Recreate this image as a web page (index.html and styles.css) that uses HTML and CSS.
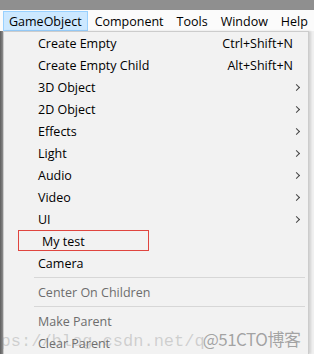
FILE: index.html
```html
<!DOCTYPE html>
<html lang="en">
<head>
    <meta charset="UTF-8">
    <meta name="viewport" content="width=device-width, initial-scale=1.0">
    <title>GameObject menu</title>
    <link rel="stylesheet" href="styles.css">
</head>
<body>

    <div class="title-strip"></div>

    <div class="menubar">
        <span class="menubar-item active">GameObject</span>
        <span class="menubar-item">Component</span>
        <span class="menubar-item">Tools</span>
        <span class="menubar-item">Window</span>
        <span class="menubar-item">Help</span>
    </div>

    <div class="workspace">
        <div class="editor-edge"></div>

        <ul class="dropdown">
            <li class="item"><span class="label">Create Empty</span><span class="shortcut">Ctrl+Shift+N</span></li>
            <li class="item"><span class="label">Create Empty Child</span><span class="shortcut">Alt+Shift+N</span></li>
            <li class="item sub"><span class="label">3D Object</span></li>
            <li class="item sub"><span class="label">2D Object</span></li>
            <li class="item sub"><span class="label">Effects</span></li>
            <li class="item sub"><span class="label">Light</span></li>
            <li class="item sub"><span class="label">Audio</span></li>
            <li class="item sub"><span class="label">Video</span></li>
            <li class="item sub"><span class="label">UI</span></li>
            <li class="item marked"><span class="label">My test</span></li>
            <li class="item"><span class="label">Camera</span></li>
            <li class="separator"></li>
            <li class="item disabled"><span class="label">Center On Children</span></li>
            <li class="separator"></li>
            <li class="item disabled"><span class="label">Make Parent</span></li>
            <li class="item disabled"><span class="label">Clear Parent</span></li>
        </ul>
    </div>

    <!-- watermark stamped over the screenshot -->
    <div class="watermark">
        <span class="wm-url">https://blog.csdn.net/q</span>
        <span class="wm-site">@51CTO博客</span>
    </div>

</body>
</html>
```

FILE: styles.css
```css
html, body {
    margin: 0;
    padding: 0;
}

body {
    width: 314px;
    height: 354px;
    overflow: hidden;
    position: relative;
    background-color: #f0f0f0;
    font-family: "Open Sans", "Noto Sans", sans-serif;
    font-size: 12.5px;
    color: #000;
}

.title-strip {
    height: 10px;
    background-color: #8f8f8f;
}

/* 顶部菜单栏 */
.menubar {
    height: 21px;
    display: flex;
    align-items: stretch;
    background-color: #fbfbfb;
    padding-left: 3px;
}

.menubar-item {
    display: flex;
    align-items: center;
    padding: 0 5px;
    margin-right: 1px;
    border: 1px solid transparent;
    margin-top: 1px;
}

.menubar-item.active {
    background-color: #cce8ff;
    border-color: #99d1ff;
}

.workspace {
    display: flex;
    height: 323px;
}

.editor-edge {
    width: 3px;
    flex: none;
    background: linear-gradient(to right, #5e5e5e, #8d8d8d);
}

/* 下拉菜单 */
.dropdown {
    list-style: none;
    margin: 0;
    padding: 0;
    width: 306px;
    flex: none;
    background-color: #f2f2f2;
    border: 1px solid #cccccc;
    border-bottom: none;
    box-sizing: border-box;
    box-shadow: 2px 0 2px rgba(0, 0, 0, 0.12);
}

.item {
    position: relative;
    height: 22px;
    display: flex;
    align-items: center;
    padding-left: 34px;
    padding-right: 15px;
}

.label {
    flex: 1;
}

.shortcut {
    text-align: right;
}

.item.sub::after {
    content: "";
    width: 4px;
    height: 4px;
    border-top: 1.3px solid #444;
    border-right: 1.3px solid #444;
    transform: rotate(45deg);
    margin-right: -6px;
}

.item.disabled {
    color: #6d6d6d;
}

.item.marked .label {
    padding-left: 4px;
}

/* 标注框, 盖在菜单项上 */
.item.marked::before {
    content: "";
    position: absolute;
    left: 14px;
    top: 0;
    width: 129px;
    height: 19px;
    border: 1px solid #e0453f;
}

.separator {
    height: 1px;
    margin: 3px 3px 3px 30px;
    background-color: #d7d7d7;
}

.watermark {
    position: absolute;
    left: -30px;
    top: 326px;
    display: flex;
    align-items: baseline;
    white-space: nowrap;
    pointer-events: none;
}

.wm-url {
    font-family: "Liberation Mono", monospace;
    font-size: 17px;
    color: rgba(140, 140, 140, 0.35);
}

.wm-site {
    font-family: "Noto Sans CJK SC", sans-serif;
    font-size: 17px;
    letter-spacing: -0.5px;
    color: rgba(110, 110, 110, 0.6);
    margin-left: -2px;
}
```
